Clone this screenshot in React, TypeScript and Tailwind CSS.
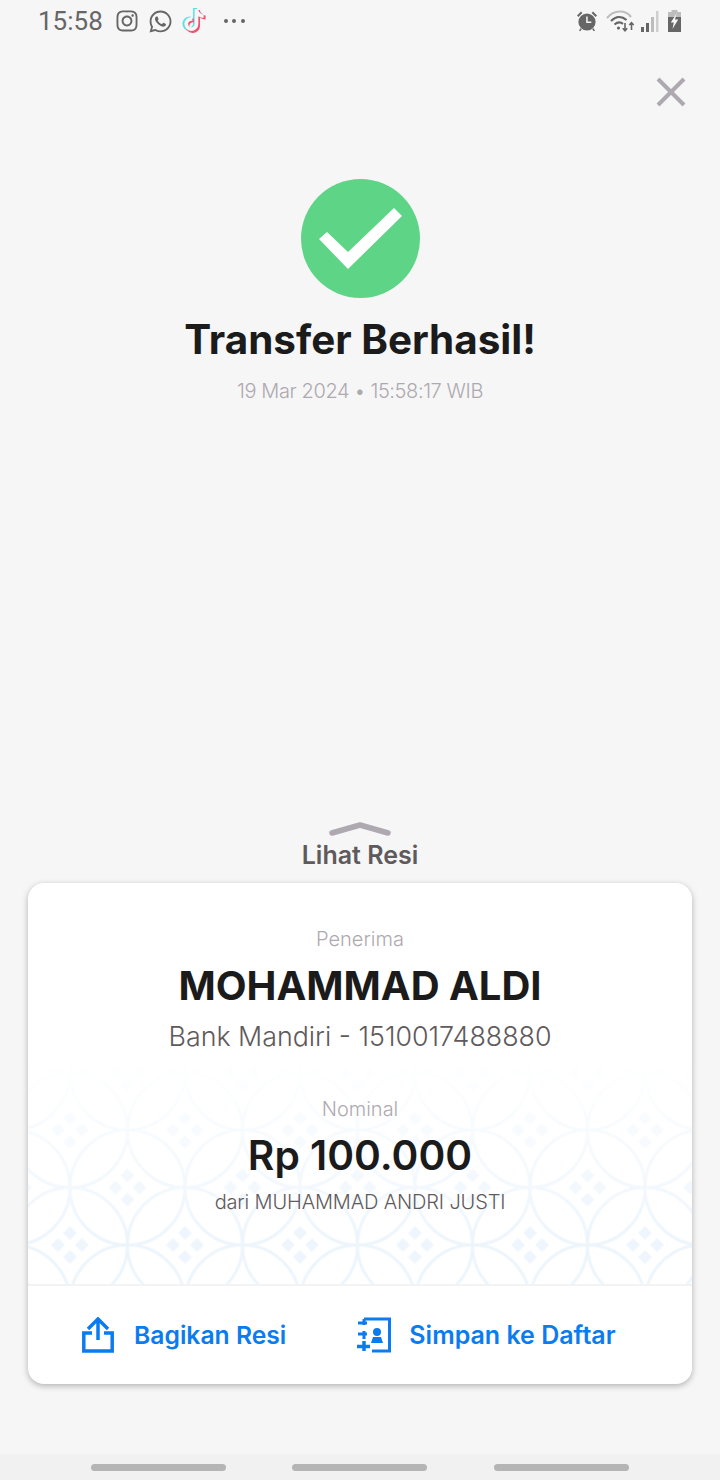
import React from "react";
import { FaInstagram, FaWhatsapp, FaTiktok } from "react-icons/fa";

function Pattern() {
  return (
    <svg className="absolute inset-0" width="664" height="228" viewBox="0 0 664 228" aria-hidden="true">
      <defs>
        <pattern id="kawung" x="-15.5" y="16.5" width="115" height="115" patternUnits="userSpaceOnUse">
          <g fill="none" stroke="#edf5fc" strokeWidth="3">
            <circle cx="0" cy="0" r="57.5" />
            <circle cx="115" cy="0" r="57.5" />
            <circle cx="0" cy="115" r="57.5" />
            <circle cx="115" cy="115" r="57.5" />
            <circle cx="57.5" cy="57.5" r="57.5" />
          </g>
          <g fill="#eef5fc">
            {[[57.5, 57.5], [0, 0], [115, 0], [0, 115], [115, 115]].map(([x, y], i) => (
              <g key={i}>
                <path d={`M${x} ${y - 19}l7 7-7 7-7-7z`} />
                <path d={`M${x} ${y + 19}l7-7-7-7-7 7z`} />
                <path d={`M${x - 19} ${y}l7-7 7 7-7 7z`} />
                <path d={`M${x + 19} ${y}l-7-7-7 7 7 7z`} />
              </g>
            ))}
          </g>
        </pattern>
        <linearGradient id="fade" x1="0" y1="0" x2="0" y2="1">
          <stop offset="0" stopColor="#fff" stopOpacity="0" />
          <stop offset="0.8" stopColor="#fff" />
        </linearGradient>
        <mask id="fadeMask">
          <rect width="664" height="228" fill="url(#fade)" />
        </mask>
      </defs>
      <rect width="664" height="228" fill="url(#kawung)" mask="url(#fadeMask)" />
    </svg>
  );
}

function TikTok() {
  return (
    <span className="relative ml-[9px] block h-[24px] w-[24px]">
      <FaTiktok className="absolute left-[-1px] top-[-1px] text-[#4fe3e6]" size={23} />
      <FaTiktok className="absolute left-[2px] top-[1px] text-[#f0526f]" size={23} />
      <FaTiktok className="absolute left-[1px] top-0 text-[#f6f6f6]" size={22} />
    </span>
  );
}

function StatusRight() {
  return (
    <div className="flex items-center">
      <svg width="22" height="22" viewBox="0 0 22 22" fill="#666">
        <circle cx="11" cy="12" r="8.6" />
        <path d="M10.2 6.5h1.5v5h3.6v1.5h-5.1z" fill="#f6f6f6" />
        <path d="M1 5.5 5 1.5l1.4 1.4-4 4zM21 5.5l-4-4-1.4 1.4 4 4z" />
        <path d="M4.5 18.2 3 20.5l1.2.8 1.7-2.2zM17.5 18.2l1.5 2.3-1.2.8-1.7-2.2z" />
      </svg>
      <svg className="ml-[8px]" width="29" height="23" viewBox="0 0 29 23" fill="none">
        <path d="M1 8C8-.5 19.500-.5 25 7" stroke="#bdbdbd" strokeWidth="2.200" />
        <path d="M5 11C10 6 16 6 20.500 10" stroke="#666" strokeWidth="2.200" />
        <path d="M8.500 14.500c3-2.500 6-2.500 8.500-.7" stroke="#666" strokeWidth="2.200" />
        <circle cx="12.500" cy="18" r="1.600" fill="#666" />
        <path d="M19 13v7.500M16.800 18.300l2.200 2.400 2.200-2.400M25.500 20V12.500M23.300 15l2.200-2.400 2.200 2.400" stroke="#666" strokeWidth="1.600" />
      </svg>
      <svg className="ml-[5px]" width="19" height="22" viewBox="0 0 19 22">
        <rect x="1" y="17" width="3" height="5" fill="#666" />
        <rect x="6" y="13" width="3" height="9" fill="#666" />
        <rect x="11" y="7" width="3" height="15" fill="#bdbdbd" />
        <rect x="16" y="1" width="2.500" height="21" fill="#cfcfcf" />
      </svg>
      <svg className="ml-[8px]" width="15" height="22" viewBox="0 0 15 22">
        <path d="M4.500 0h6v2h-6z" fill="#bdbdbd" />
        <path d="M1 2h13v5H1z" fill="#bdbdbd" />
        <path d="M1 7h13v15H1z" fill="#666" />
        <path d="M9.500 3.500 3.800 12.500h3l-1.300 6.500 5.700-9.500H8z" fill="#f6f6f6" />
      </svg>
    </div>
  );
}

export default function App() {
  return (
    <div className="flex h-[1480px] w-[720px] flex-col overflow-hidden bg-[#f6f6f6] font-['Inter',sans-serif]">
      {/* status bar */}
      <div className="flex h-[42px] items-center justify-between pl-[38px] pr-[38px] text-[#666666]">
        <div className="flex items-center">
          <span className="font-['Roboto',sans-serif] text-[26px] leading-[42px]">15:58</span>
          <FaInstagram className="ml-[12px]" size={24} />
          <FaWhatsapp className="ml-[9px]" size={25} />
          <TikTok />
          <div className="ml-[18px] flex gap-[4.500px]">
            <span className="h-[4px] w-[4px] rounded-full bg-[#666666]" />
            <span className="h-[4px] w-[4px] rounded-full bg-[#666666]" />
            <span className="h-[4px] w-[4px] rounded-full bg-[#666666]" />
          </div>
        </div>
        <StatusRight />
      </div>

      {/* close */}
      <div className="flex justify-end pr-[34px] pt-[35px]">
        <svg width="30" height="30" viewBox="0 0 30 30" fill="none" stroke="#aea8b0" strokeWidth="4">
          <path d="M2 2l26 26M28 2 2 28" />
        </svg>
      </div>

      {/* success */}
      <div className="mt-[72px] flex flex-col items-center">
        <div className="flex h-[119px] w-[119px] items-center justify-center rounded-full bg-[#5dd486]">
          <svg className="ml-[2px]" width="84" height="62" viewBox="0 0 84 62" fill="#ffffff">
            <path d="M0 31 8 24 29 44 75 0 83 8 29 61z" />
          </svg>
        </div>
        <h1 className="mt-[18px] text-[40.400px] font-bold leading-[48px] text-[#1b1b1b]">Transfer Berhasil!</h1>
        <p className="mt-[14px] text-[20px] font-light leading-[26px] tracking-[-0.4px] text-[#aea9b0]">19 Mar 2024 • 15:58:17 WIB</p>
      </div>

      <div className="flex-1" />

      {/* handle */}
      <div className="flex flex-col items-center">
        <svg width="64" height="20" viewBox="0 0 64 20" fill="none" stroke="#aea8b0" strokeWidth="5.500" strokeLinecap="round" strokeLinejoin="round">
          <path d="M4 15 32 7l28 8" />
        </svg>
        <span className="mt-[2px] text-[25px] font-semibold leading-[30px] text-[#5f5a5c]">Lihat Resi</span>
      </div>

      {/* card */}
      <div className="mx-[28px] mt-[13px] flex h-[501px] flex-col overflow-hidden rounded-[16px] bg-white shadow-[0_2px_6px_rgba(0,0,0,0.28)]">
        <div className="flex h-[173px] flex-col items-center pt-[43px] text-center">
          <span className="text-[20px] font-light leading-[26px] text-[#aea9b0]">Penerima</span>
          <span className="mt-[10px] text-[40px] font-bold leading-[48px] text-[#1b1b1b]">MOHAMMAD ALDI</span>
          <span className="mt-[9px] text-[26.800px] font-light leading-[34px] text-[#5f5a5c]">Bank Mandiri - 1510017488880</span>
        </div>
        <div className="relative flex h-[228px] flex-col items-center pt-[40px]">
          <Pattern />
          <span className="relative text-[20px] font-light leading-[26px] text-[#aea9b0]">Nominal</span>
          <span className="relative mt-[10px] text-[40.700px] font-semibold leading-[48px] text-[#1b1b1b]">Rp 100.000</span>
          <span className="relative mt-[9px] text-[20px] font-light leading-[26px] tracking-[-0.15px] text-[#5f5a5c]">dari MUHAMMAD ANDRI JUSTI</span>
        </div>
        <div className="flex h-[100px] items-center border-t-2 border-[#f3f3f3] text-[#0a7cf0]">
          <div className="ml-[54px] flex items-center">
            <svg width="32" height="36" viewBox="0 0 32 36" fill="none" stroke="currentColor" strokeWidth="3.500">
              <path d="M16 2.500V23M6 12 16 2l10 10" />
              <path d="M10 16H1.800v18h28.400V16H22" />
            </svg>
            <span className="ml-[20px] text-[24.700px] font-semibold leading-[30px]">Bagikan Resi</span>
          </div>
          <div className="ml-[70px] flex items-center">
            <svg width="35" height="36" viewBox="0 0 35 36" fill="none" stroke="currentColor" strokeWidth="3">
              <path d="M8 2h25.500v32H16M8 2v6M8 14v8" />
              <path d="M2 6h9M2 17h9" strokeWidth="3" />
              <path d="M8 24v10M1 29.500h13" strokeWidth="3.500" />
              <circle cx="21" cy="15" r="4" fill="currentColor" stroke="none" />
              <path d="M15 26l2-6h8l2 6z" fill="currentColor" stroke="none" />
            </svg>
            <span className="ml-[18px] text-[25px] font-semibold leading-[30px]">Simpan ke Daftar</span>
          </div>
        </div>
      </div>

      {/* nav */}
      <div className="mt-[70px] flex h-[26px] items-center bg-[#f1f1f1] pl-[91px]">
        <span className="h-[7px] w-[135px] rounded-full bg-[#b5b5b5]" />
        <span className="ml-[66px] h-[7px] w-[135px] rounded-full bg-[#b5b5b5]" />
        <span className="ml-[67px] h-[7px] w-[135px] rounded-full bg-[#b5b5b5]" />
      </div>
    </div>
  );
}
